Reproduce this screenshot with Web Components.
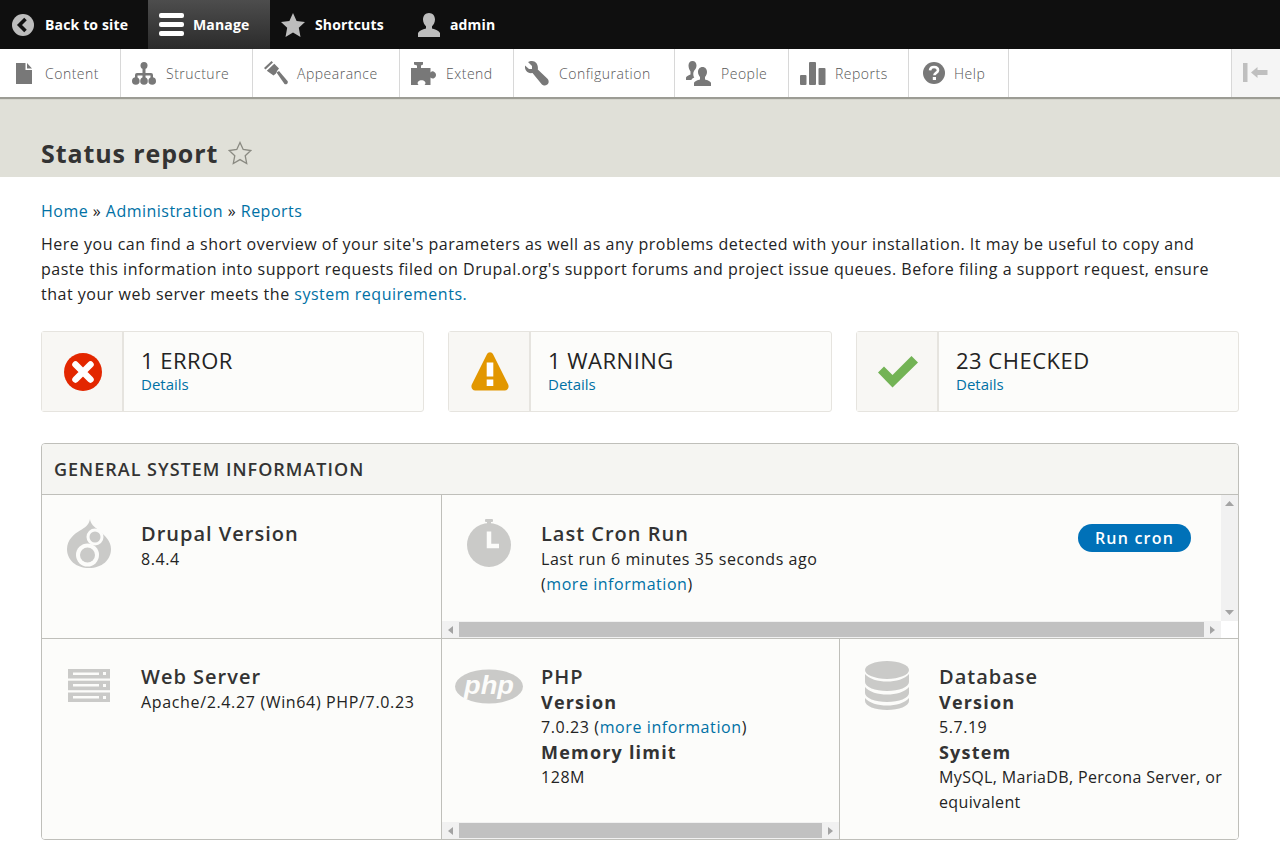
<!DOCTYPE html>
<html lang="en"><head><meta charset="utf-8"><title>Status report</title>
<style>
html,body{margin:0;padding:0;background:#fff;overflow:hidden;height:850px}
body{font-family:"Open Sans","Liberation Sans",sans-serif;font-size:16px;line-height:25px;color:#232323;--link:#0071a5}
a{color:var(--link);text-decoration:none}
</style></head><body>
<dr-toolbar></dr-toolbar>
<dr-tray></dr-tray>
<dr-title>Status report</dr-title>
<dr-main>
  <dr-crumbs></dr-crumbs>
  <dr-intro></dr-intro>
  <dr-counters>
    <dr-counter kind="error" label="1 ERROR"></dr-counter>
    <dr-counter kind="warning" label="1 WARNING"></dr-counter>
    <dr-counter kind="ok" label="23 CHECKED"></dr-counter>
  </dr-counters>
  <dr-general></dr-general>
</dr-main>
<script>
const I={
 back:'<svg width="22" height="22" viewBox="0 0 22 22"><circle cx="11" cy="11" r="11" fill="#bdbdbd"/><path d="M13.5 5 7.5 11l6 6" fill="none" stroke="#111" stroke-width="3.6"/></svg>',
 menu:'<svg width="26" height="24" viewBox="0 0 26 24"><g fill="#fff"><rect x="0" y="0" width="25" height="5" rx="2"/><rect x="0" y="9" width="25" height="5" rx="2"/><rect x="0" y="18" width="25" height="5" rx="2"/></g></svg>',
 star:'<svg width="24" height="24" viewBox="0 0 24 24"><path fill="#bdbdbd" d="M12 0l3.6 8 8.4 1-6.2 5.8L19.5 24 12 19.4 4.5 24l1.7-9.2L0 9l8.4-1z"/></svg>',
 user:'<svg width="24" height="24" viewBox="0 0 24 24"><path fill="#bdbdbd" d="M12 0c3.6 0 6 2.8 6 6.6 0 3-1.5 5.3-3 6.6v2.3c3.5 1 7 2.3 8 4.5v4H1v-4c1-2.2 4.5-3.5 8-4.5v-2.3c-1.5-1.3-3-3.6-3-6.6C6 2.8 8.400 0 12 0z"/></svg>',
 content:'<svg width="16" height="21" viewBox="0 0 16 21"><path fill="#787878" d="M0 0h9.500v7H16v14H0zM11 0l5 5.500h-5z"/></svg>',
 structure:'<svg width="24" height="23" viewBox="0 0 24 23"><g fill="#787878"><circle cx="12" cy="3.500" r="3.500"/><rect x="10.500" y="5" width="3" height="7"/><path d="M3 18v-5a2 2 0 0 1 2-2h14a2 2 0 0 1 2 2v5h-2.500v-4.500h-13V18z"/><rect x="10.500" y="11" width="3" height="7"/><circle cx="3.800" cy="19" r="3.800"/><circle cx="12" cy="19" r="3.800"/><circle cx="20.200" cy="19" r="3.800"/></g></svg>',
 appearance:'<svg width="24" height="24" viewBox="0 0 24 24"><g fill="#787878"><path d="M7.500 0 0 7l1.500 1.500L9 1.500z"/><path d="M2.800 9.800 10.300 2.800 15 7.500 13.200 9.800 12 12.500 9.500 14.500z"/><path d="M12.500 11.500 15 10l8.500 10a2.200 2.200 0 0 1-3 3z"/></g></svg>',
 extend:'<svg width="25" height="23" viewBox="0 0 25 23"><path fill="#787878" d="M3 0h9v2.500L10 3.500v2.500h9.500v4.500c1-1 2-1.500 3-1 1.800.8 2.500 2.200 2.500 3.500s-.8 2.800-2.500 3.400c-1 .3-2 0-3-1V23h-6c1.200-1.200 1.300-2.500.3-3.600-1.500-1.500-5-1.500-6.500 0-1 1.100-.9 2.400.3 3.600H0V6h6V3.500L3 2.500z"/></svg>',
 config:'<svg width="25" height="25" viewBox="0 0 25 25"><path fill="#787878" d="M7 0c-1.500 0-3 .5-4 1l4 4v3H4L0 4.500C-.300 6 0 8 1 9.500c1.500 2.200 4 3 6.500 2.500l9 11c1.500 1.800 4 2 5.800.5s1.800-4 .2-5.700L12.800 8.500C13.500 4 11 0 7 0z"/></svg>',
 people:'<svg width="25" height="25" viewBox="0 0 25 25"><g fill="#787878"><path d="M6.500 0C9 0 10.500 2 10.500 4.500c0 1.500-.6 3-1.400 4-1.300 1.300-1.800 3-1.800 4.500 0 1.500.3 2.500 1 3.500-1.500.6-2.500 1.300-3 2.500H0v-2.500c.5-1.500 3-2.500 4.500-3V10.500C3.500 9 2.500 7 2.500 4.500 2.500 2 4 0 6.500 0z"/><path d="M16.500 6c2.800 0 4.500 2.200 4.500 5 0 2-1 3.800-2 5v2.500c2 .6 5.500 1.600 6 3.500v3H8v-3c.5-1.900 4-2.900 6-3.500V16c-1-1.200-2-3-2-5 0-2.800 1.700-5 4.500-5z"/></g></svg>',
 reports:'<svg width="26" height="23" viewBox="0 0 26 23"><g fill="#787878"><rect x="0" y="13" width="6.500" height="10" rx="1"/><rect x="9" y="0" width="7" height="23" rx="1"/><rect x="18.500" y="6" width="7" height="17" rx="1"/></g></svg>',
 help:'<svg width="22" height="22" viewBox="0 0 22 22"><circle cx="11" cy="11" r="11" fill="#787878"/><path d="M7 8.300C7.300 6 9 5 11 5c2.300 0 4 1.300 4 3.200 0 2.600-3.600 2.600-3.600 5" fill="none" stroke="#fff" stroke-width="2.600"/><rect x="9.800" y="15" width="3.200" height="3" fill="#fff"/></svg>',
 collapse:'<svg width="26" height="20" viewBox="0 0 26 20"><g fill="#bfbfbf"><rect x="0" y="0" width="4.500" height="19"/><path d="M8 9.500 14.500 4v3h10v5h-10v3z"/></g></svg>',
 starO:'<svg width="24" height="24" viewBox="0 0 24 24"><path fill="none" stroke="#8a8a82" stroke-width="1.300" d="M12 1.500l3.200 7 7.600 1-5.600 5.200 1.500 7.800-6.700-3.900-6.700 3.900 1.500-7.800L1.200 9.500l7.600-1z"/></svg>',
 error:'<svg width="38" height="38" viewBox="0 0 38 38"><circle cx="19" cy="19" r="19" fill="#e32700"/><path d="M11.500 11.500 26.500 26.500M26.500 11.500 11.500 26.500" stroke="#fff" stroke-width="6.500" stroke-linecap="round"/></svg>',
 warning:'<svg width="38" height="39" viewBox="0 0 38 39"><path fill="#e29700" d="M15.800 2.500c1.500-3 4.900-3 6.400 0l15 30c1.200 3-.5 6-3.500 6h-29.400c-3 0-4.700-3-3.500-6z"/><rect x="15.700" y="10.500" width="6.600" height="14" fill="#fff"/><rect x="15.700" y="27.500" width="6.600" height="6.500" fill="#fff"/></svg>',
 ok:'<svg width="40" height="32" viewBox="0 0 40 32"><path fill="#73b355" d="M0 16.500 6 10.500 14.500 19 33.500 0 40 6.500 14.500 31.500z"/></svg>',
 drupal:'<svg width="44" height="49" viewBox="0 0 44 49"><path fill="#cacac8" fill-rule="evenodd" d="M23 0c.5 5 4 7.500 9 11.500C38 16.500 44 22 44 30c0 11-9 19-22 19S0 41 0 30C0 21 7 15 13 11.500 18 8.500 22 6 23 0z"/><circle cx="28" cy="18" r="8.500" fill="#fcfcfa"/><circle cx="28" cy="18" r="5.500" fill="#cacac8"/><circle cx="20.500" cy="36" r="11.500" fill="#fcfcfa"/><circle cx="20.500" cy="36" r="7.500" fill="#cacac8"/></svg>',
 clock:'<svg width="44" height="49" viewBox="0 0 44 49"><g fill="#cacac8"><rect x="18" y="0" width="8" height="3" rx="1"/><rect x="20" y="2" width="4" height="4"/><circle cx="22" cy="26" r="22"/></g><path d="M22 12.500V27h10" fill="none" stroke="#fcfcfa" stroke-width="4.500"/></svg>',
 server:'<svg width="42" height="33" viewBox="0 0 42 33"><g fill="#cacac8"><rect width="42" height="9.500"/><rect y="11.700" width="42" height="9.500"/><rect y="23.500" width="42" height="9.500"/></g><g fill="#fcfcfa"><rect x="5" y="3.500" width="26" height="2.500"/><rect x="35" y="3" width="3" height="3"/><rect x="5" y="15" width="26" height="2.500"/><rect x="35" y="15" width="3" height="3"/><rect x="5" y="27" width="26" height="2.500"/><rect x="35" y="27" width="3" height="3"/></g></svg>',
 php:'<svg width="68" height="35" viewBox="0 0 68 35"><ellipse cx="34" cy="17.500" rx="34" ry="17" fill="#cacac8"/><text x="34" y="24.500" text-anchor="middle" font-family="Liberation Sans,sans-serif" font-size="26" font-weight="700" font-style="italic" fill="#fcfcfa" textLength="50" lengthAdjust="spacingAndGlyphs">php</text></svg>',
 db:'<svg width="46" height="49" viewBox="0 0 46 49"><g fill="#cacac8"><ellipse cx="23" cy="9" rx="22" ry="9"/><path d="M1 13c4 5 13 7.500 22 7.500S41 18 45 13v8c0 5-10 9-22 9S1 26 1 21z"/><path d="M1 26c4 5 13 7.500 22 7.500S41 31 45 26v6c0 5-10 9-22 9S1 37 1 32z"/><path d="M1 37c4 5 13 7.500 22 7.500S41 42 45 37v3c0 5-10 9-22 9S1 45 1 40z"/></g></svg>'
};
const def=(n,css,html)=>customElements.define(n,class extends HTMLElement{
  connectedCallback(){ if(this.shadowRoot) return;
    const r=this.attachShadow({mode:'open'});
    r.innerHTML='<style>'+css+'</style>'+(typeof html==='function'?html(this):html);
  }
});
const linkCss='a{color:var(--link);text-decoration:none}';
def('dr-tab',`:host{display:flex;align-items:center;height:49px;box-sizing:border-box;color:#fff;font-weight:700;font-size:14px;letter-spacing:.15px}
:host([active]){background:linear-gradient(#4d4d4d,#2b2b2b)}
.i{display:flex}`,e=>`<span class="i" style="margin-left:${e.getAttribute('pad')}px;margin-right:${e.getAttribute('gap')}px">${I[e.getAttribute('icon')]}</span><slot></slot>`);
def('dr-toolbar',`:host{display:flex;height:49px;background:#0f0f0f}`,`
<dr-tab icon="back" pad="12" gap="11" style="width:148px">Back to site</dr-tab>
<dr-tab icon="menu" pad="11" gap="8" active style="width:122px">Manage</dr-tab>
<dr-tab icon="star" pad="11" gap="10" style="width:130px">Shortcuts</dr-tab>
<dr-tab icon="user" pad="17" gap="9" style="width:120px">admin</dr-tab>`);
def('dr-item',`:host{display:flex;align-items:center;box-sizing:border-box;height:48px;border-right:1px solid #d8d8d8;color:#565656;font-size:14px;letter-spacing:.5px;font-weight:300}
.i{display:flex}`,e=>`<span class="i" style="margin-left:${e.getAttribute('pad')}px;margin-right:${e.getAttribute('gap')}px">${I[e.getAttribute('icon')]}</span><slot></slot>`);
def('dr-tray',`:host{display:flex;height:48px;background:#fff;box-shadow:0 2px 1px 0 #9c9c94;position:relative;z-index:2}
.sp{flex:1}.c{width:49px;background:#f5f5f5;border-left:1px solid #d8d8d8;display:flex;align-items:center;padding-left:11px;box-sizing:border-box}`,`
<dr-item icon="content" pad="16" gap="13" style="width:121px">Content</dr-item>
<dr-item icon="structure" pad="11" gap="10" style="width:132px">Structure</dr-item>
<dr-item icon="appearance" pad="11" gap="9" style="width:147px">Appearance</dr-item>
<dr-item icon="extend" pad="11" gap="10" style="width:114px">Extend</dr-item>
<dr-item icon="config" pad="11" gap="9" style="width:161px">Configuration</dr-item>
<dr-item icon="people" pad="11" gap="10" style="width:114px">People</dr-item>
<dr-item icon="reports" pad="11" gap="9" style="width:120px">Reports</dr-item>
<dr-item icon="help" pad="14" gap="9" style="width:100px">Help</dr-item>
<span class="sp"></span><span class="c">${I.collapse}</span>`);
def('dr-title',`:host{display:flex;align-items:flex-end;height:80px;box-sizing:border-box;background:#e0e0d8;padding:0 0 9px 41px;font-weight:700;font-size:25px;line-height:30px;color:#333;letter-spacing:.9px}
.s{display:flex;margin:0 0 3px 10px}`,`<slot></slot><span class="s">${I.starO}</span>`);
def('dr-main',`:host{display:block;padding:22px 41px 0}`,`<slot></slot>`);
def('dr-crumbs',`:host{display:block;letter-spacing:.48px;height:25px}`+linkCss,`<a href="#">Home</a> » <a href="#">Administration</a> » <a href="#">Reports</a>`);
def('dr-intro',`:host{display:block;margin-top:8px;letter-spacing:.51px;padding-right:20px}`+linkCss,`Here you can find a short overview of your site's parameters as well as any problems detected with your installation. It may be useful to copy and paste this information into support requests filed on Drupal.org's support forums and project issue queues. Before filing a support request, ensure that your web server meets the <a href="#">system requirements.</a>`);
def('dr-counters',`:host{display:grid;grid-template-columns:383px 384px 383px;gap:24px;margin-top:24px}`,`<slot></slot>`);
def('dr-counter',`:host{display:flex;height:81px;box-sizing:border-box;border:1px solid #e6e4df;border-radius:3px;background:#fcfcfa}
.i{width:82px;padding-left:1px;flex:none;display:flex;align-items:center;justify-content:center;background:#f8f7f4;border-right:2px solid #e6e4df;box-sizing:border-box}
.t{padding:16px 0 0 17px;line-height:25px}
.c{font-size:22px;letter-spacing:.5px;font-weight:400;color:#232323;display:block}
a{font-size:15px;line-height:21px;margin-top:1px;display:block;color:var(--link);text-decoration:none}`,e=>`<span class="i">${I[e.getAttribute('kind')]}</span><span class="t"><span class="c">${e.getAttribute('label')}</span><a href="#">Details</a></span>`);
def('dr-hscroll',`:host{display:flex;height:17px;background:#f1f1f1;align-items:stretch;flex:none}
.a{width:17px;display:flex;align-items:center;justify-content:center;flex:none}
.th{flex:1;background:#c1c1c1;margin:1px 0}`,`<span class="a"><svg width="5" height="8"><path d="M5 0v8L0 4z" fill="#a3a3a3"/></svg></span><span class="th"></span><span class="a"><svg width="5" height="8"><path d="M0 0v8l5-4z" fill="#a3a3a3"/></svg></span>`);
def('dr-vscroll',`:host{display:flex;flex-direction:column;justify-content:space-between;width:17px;background:#f1f1f1;align-items:center;padding:6px 0;box-sizing:border-box;flex:none}`,`<svg width="9" height="5"><path d="M0 5h9L4.500 0z" fill="#a3a3a3"/></svg><svg width="9" height="5"><path d="M0 0h9L4.500 5z" fill="#a3a3a3"/></svg>`);
def('dr-cell',`:host{display:flex;flex-direction:column;min-width:0;background:#fcfcfa;line-height:25px;color:#232323}
.m{flex:1;display:flex;min-height:0}
.i{width:93px;margin-right:6px;flex:none;display:flex;justify-content:center;align-items:flex-start;box-sizing:border-box}
.t{flex:1;min-width:0}
::slotted(h3){margin:0 0 2px;font-size:20px;line-height:23px;font-weight:600;letter-spacing:1px;color:#333}
::slotted(h4){margin:0;font-size:18px;line-height:25px;font-weight:700;letter-spacing:1.2px;color:#333}
::slotted(div){letter-spacing:.55px}`,e=>`<div class="m"><span class="i" style="padding-top:${e.getAttribute('it')}px">${I[e.getAttribute('icon')]}</span><div class="t" style="padding-top:${e.getAttribute('tt')}px"><slot></slot></div><slot name="aside"></slot></div><slot name="bottom"></slot>`);
def('dr-general',`:host{display:block;margin-top:31px;border:1px solid #bfbfba;border-radius:4px;overflow:hidden;height:397px;box-sizing:border-box}
.h{height:50px;background:#f5f5f2;border-bottom:1px solid #bfbfba;display:flex;align-items:center;padding-left:12px;font-size:18px;letter-spacing:1px;font-weight:600;color:#333;box-sizing:content-box;margin:0}
.r1{display:grid;grid-template-columns:399px 1px 1fr;height:143px;border-bottom:1px solid #bfbfba}
.r2{display:grid;grid-template-columns:399px 1px 397px 1px 1fr;height:200px}
.l{background:#bfbfba}
dr-cell{height:100%}`,`
<h2 class="h">GENERAL SYSTEM INFORMATION</h2>
<div class="r1">
 <dr-cell icon="drupal" it="24" tt="27"><h3>Drupal Version</h3><div>8.4.4</div></dr-cell>
 <span class="l"></span>
 <dr-cell icon="clock" it="24" tt="27">
   <h3>Last Cron Run</h3><div>Last run 6 minutes 35 seconds ago<br>(<a href="#" style="color:var(--link);text-decoration:none">more information</a>)</div>
   <dr-btn slot="aside">Run cron</dr-btn>
   <dr-vscroll slot="aside"></dr-vscroll>
   <dr-corner slot="bottom"></dr-corner>
 </dr-cell>
</div>
<div class="r2">
 <dr-cell icon="server" it="30" tt="26"><h3>Web Server</h3><div style="letter-spacing:.65px">Apache/2.4.27 (Win64) PHP/7.0.23</div></dr-cell>
 <span class="l"></span>
 <dr-cell icon="php" it="30" tt="26"><h3>PHP</h3><h4>Version</h4><div style="letter-spacing:.6px">7.0.23 (<a href="#" style="color:var(--link);text-decoration:none">more information</a>)</div><h4>Memory limit</h4><div>128M</div>
   <dr-hscroll slot="bottom"></dr-hscroll></dr-cell>
 <span class="l"></span>
 <dr-cell icon="db" it="22" tt="26"><h3>Database</h3><h4>Version</h4><div>5.7.19</div><h4>System</h4><div style="letter-spacing:.36px">MySQL, MariaDB, Percona Server, or equivalent</div></dr-cell>
</div>`);
def('dr-btn',`:host{display:flex;align-items:flex-start;padding:29px 30px 0 0;flex:none}
span{display:block;width:113px;height:28px;line-height:29px;border-radius:14px;background:#0071b8;color:#fff;text-align:center;font-size:16px;font-weight:600;letter-spacing:1.2px}`,`<span><slot></slot></span>`);
def('dr-corner',`:host{display:flex;height:17px;flex:none}dr-hscroll{flex:1}span{width:17px;background:#fff}`,`<dr-hscroll></dr-hscroll><span></span>`);
</script>
</body></html>
